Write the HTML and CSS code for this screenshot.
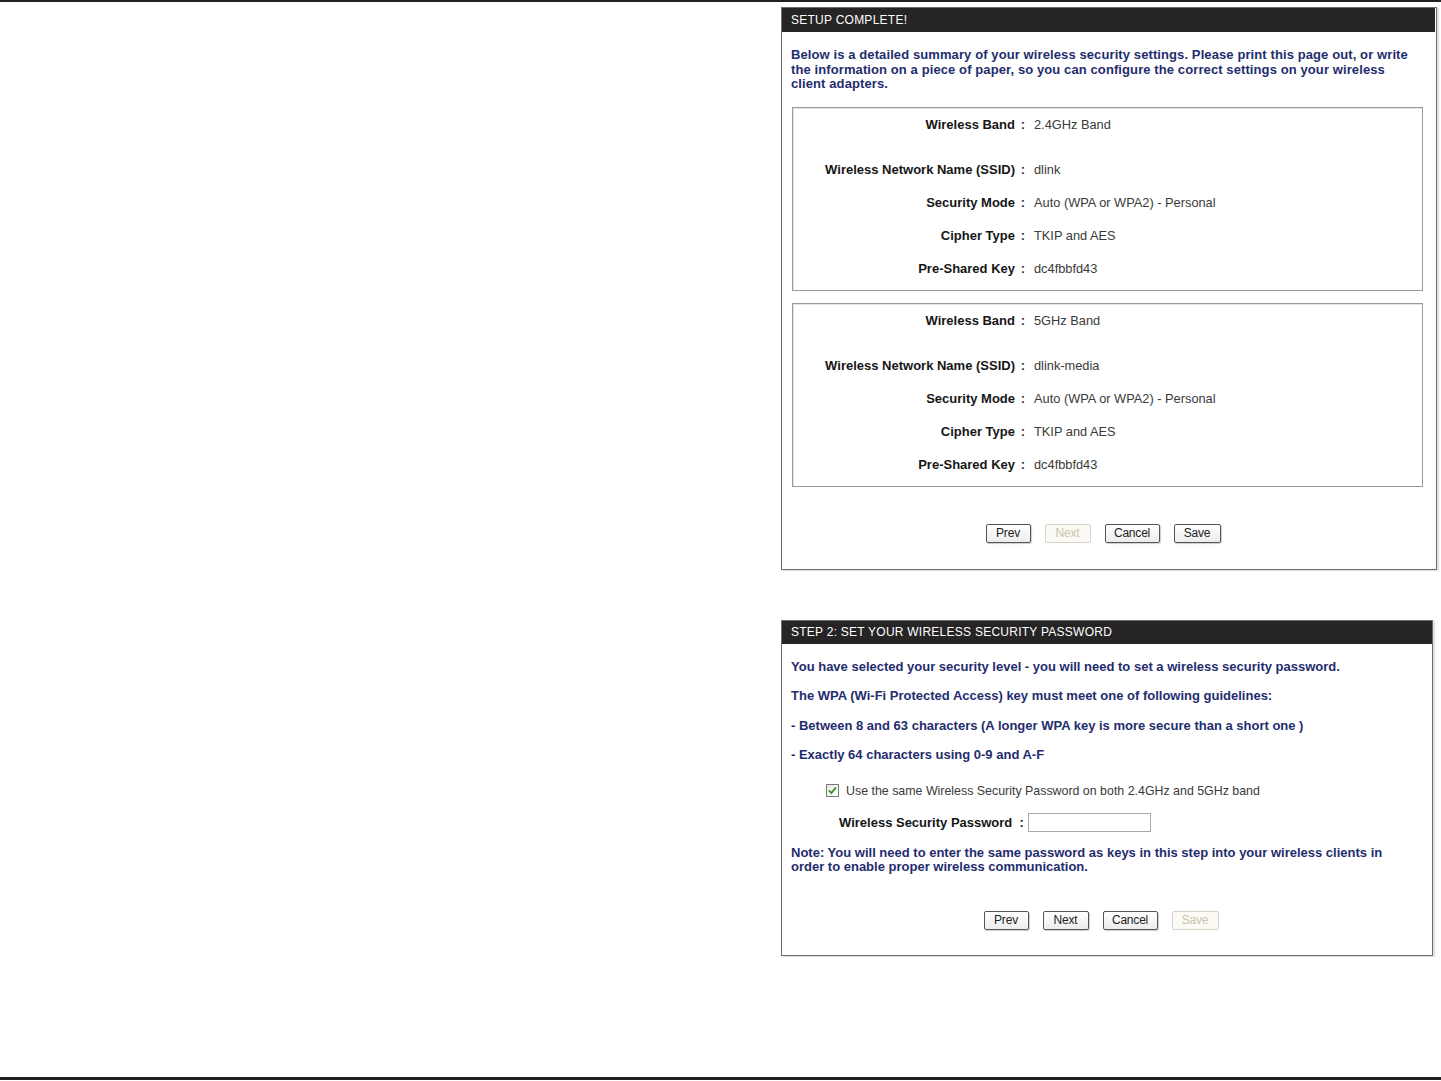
FILE: index.html
```html
<!DOCTYPE html>
<html lang="en">
<head>
  <meta charset="UTF-8">
  <title>Wireless Setup</title>
  <link rel="stylesheet" href="styles.css">
</head>
<body>
  <div class="page">
    <div class="rule rule-top"></div>

    <div class="content">
      <div class="panel panel-summary">
        <div class="panel-head">SETUP COMPLETE!</div>
        <div class="panel-body">
          <p class="intro">Below is a detailed summary of your wireless security settings. Please print this page out, or write the information on a piece of paper, so you can configure the correct settings on your wireless client adapters.</p>

          <div class="band-box">
            <div class="row row-first"><span class="label">Wireless Band</span><span class="colon">:</span><span class="value">2.4GHz Band</span></div>
            <div class="row row-ssid"><span class="label">Wireless Network Name (SSID)</span><span class="colon">:</span><span class="value">dlink</span></div>
            <div class="row"><span class="label">Security Mode</span><span class="colon">:</span><span class="value">Auto (WPA or WPA2) - Personal</span></div>
            <div class="row"><span class="label">Cipher Type</span><span class="colon">:</span><span class="value">TKIP and AES</span></div>
            <div class="row"><span class="label">Pre-Shared Key</span><span class="colon">:</span><span class="value">dc4fbbfd43</span></div>
          </div>

          <div class="band-box">
            <div class="row row-first"><span class="label">Wireless Band</span><span class="colon">:</span><span class="value">5GHz Band</span></div>
            <div class="row row-ssid"><span class="label">Wireless Network Name (SSID)</span><span class="colon">:</span><span class="value">dlink-media</span></div>
            <div class="row"><span class="label">Security Mode</span><span class="colon">:</span><span class="value">Auto (WPA or WPA2) - Personal</span></div>
            <div class="row"><span class="label">Cipher Type</span><span class="colon">:</span><span class="value">TKIP and AES</span></div>
            <div class="row"><span class="label">Pre-Shared Key</span><span class="colon">:</span><span class="value">dc4fbbfd43</span></div>
          </div>

          <div class="buttons buttons-summary">
            <button class="btn btn-prev">Prev</button>
            <button class="btn btn-next" disabled>Next</button>
            <button class="btn btn-cancel">Cancel</button>
            <button class="btn btn-save">Save</button>
          </div>
        </div>
      </div>

      <div class="panel panel-step">
        <div class="panel-head">STEP 2: SET YOUR WIRELESS SECURITY PASSWORD</div>
        <div class="panel-body">
          <p class="line">You have selected your security level - you will need to set a wireless security password.</p>
          <p class="line">The WPA (Wi-Fi Protected Access) key must meet one of following guidelines:</p>
          <p class="line">- Between 8 and 63 characters (A longer WPA key is more secure than a short one )</p>
          <p class="line">- Exactly 64 characters using 0-9 and A-F</p>

          <label class="same-pass">
            <span class="check">
              <svg width="9" height="9" viewBox="0 0 9 9"><path d="M1 4.5 L3.4 7 L8 1.5" fill="none" stroke="#2f8a1e" stroke-width="1.8"/></svg>
            </span>
            Use the same Wireless Security Password on both 2.4GHz and 5GHz band
          </label>

          <div class="pass-row">
            <span class="pass-label">Wireless Security Password &nbsp;:</span>
            <input class="pass-input" type="text">
          </div>

          <p class="note">Note: You will need to enter the same password as keys in this step into your wireless clients in order to enable proper wireless communication.</p>

          <div class="buttons buttons-step">
            <button class="btn btn-prev">Prev</button>
            <button class="btn btn-next">Next</button>
            <button class="btn btn-cancel">Cancel</button>
            <button class="btn btn-save" disabled>Save</button>
          </div>
        </div>
      </div>
    </div>

    <div class="rule rule-bottom"></div>
  </div>
</body>
</html>
```

FILE: styles.css
```css
* {
  margin: 0;
  padding: 0;
  box-sizing: border-box;
}

body {
  background: #fff;
  font-family: 'Liberation Sans', Arial, sans-serif;
  font-size: 12px;
  color: #222;
}

.page {
  height: 1081px;
  display: flex;
  flex-direction: column;
}

.rule {
  background: #231f20;
  width: 100%;
}

.rule-top {
  height: 2px;
}

.rule-bottom {
  height: 3px;
  margin-top: auto;
  margin-bottom: 1px;
}

.content {
  display: flex;
  flex-direction: column;
  align-items: flex-start;
  padding-left: 781px;
}

/* panels */
.panel {
  background: #fff;
  border: 1px solid #6e6e6e;
  box-shadow: 2px 1px 1px rgba(0, 0, 0, 0.12);
}

.panel-summary {
  width: 656px;
  margin-top: 5px;
}

.panel-step {
  width: 652px;
  margin-top: 50px;
}

.panel-head {
  background: #262424;
  color: #fff;
  height: 24px;
  line-height: 24px;
  padding-left: 9px;
  font-size: 12px;
  letter-spacing: 0.25px;
  margin-right: 1px;
}

.panel-step .panel-head {
  height: 23px;
  line-height: 23px;
  margin-right: 0;
}

.panel-body {
  padding: 16px 13px 25px 9px;
}

.panel-summary .panel-body {
  padding-bottom: 26px;
}

.intro,
.line,
.note {
  color: #1f2d6e;
  font-weight: bold;
  font-size: 13px;
  line-height: 14.5px;
}

.intro {
  margin: 0 12px 15px 0;
  letter-spacing: 0.1px;
}

/* summary boxes */
.band-box {
  border: 1px solid #9a9a9a;
  box-shadow: inset 1px 1px 0 #e4e4e4;
  margin-left: 1px;
  padding: 8px 0 12px;
}

.band-box + .band-box {
  margin-top: 12px;
}

.row {
  display: flex;
  height: 18px;
  line-height: 18px;
  margin-top: 15px;
}

.row-first {
  margin-top: 0;
}

.row-ssid {
  margin-top: 27px;
}

.label {
  width: 222px;
  text-align: right;
  font-weight: bold;
  font-size: 13px;
  color: #161616;
}

.colon {
  width: 16px;
  text-align: center;
  font-weight: bold;
  font-size: 13px;
  color: #333;
}

.value {
  margin-left: 3px;
  font-size: 12.8px;
  color: #3a3a3a;
}

/* buttons */
.buttons {
  display: flex;
  justify-content: center;
  gap: 14px;
}

.buttons-summary {
  margin-top: 37px;
  padding-right: 8px;
}

.buttons-step {
  margin-top: 36px;
  padding-right: 8px;
}

.btn {
  height: 19px;
  font-family: 'Liberation Sans', Arial, sans-serif;
  font-size: 12px;
  color: #222;
  background: linear-gradient(#fff, #ececec);
  border: 1px solid #555;
  border-radius: 2px;
  box-shadow: 1px 1px 1px rgba(0, 0, 0, 0.2);
  letter-spacing: -0.2px;
}

.btn:disabled {
  color: #cbc4ab;
  border-color: #d6d2c6;
  background: #fbfaf5;
  box-shadow: none;
}

.btn-prev { width: 45px; }
.btn-next { width: 46px; }
.btn-cancel { width: 55px; }
.btn-save { width: 47px; }

/* step panel */
.line + .line {
  margin-top: 15px;
}

.same-pass {
  display: flex;
  align-items: center;
  margin: 21px 0 0 35px;
  height: 14px;
  font-size: 12.4px;
  color: #3a3a3a;
}

.check {
  width: 13px;
  height: 13px;
  border: 1px solid #7a7a7a;
  background: linear-gradient(135deg, #e6e6e6, #fff);
  display: flex;
  align-items: center;
  justify-content: center;
  margin-right: 7px;
}

.pass-row {
  display: flex;
  align-items: center;
  margin: 15px 0 0 48px;
  height: 20px;
}

.pass-label {
  font-weight: bold;
  font-size: 13px;
  color: #161616;
}

.pass-input {
  width: 123px;
  height: 19px;
  margin-left: 4px;
  border: 1px solid #a9a9a9;
  background: #fff;
}

.note {
  margin-top: 13px;
}
```
